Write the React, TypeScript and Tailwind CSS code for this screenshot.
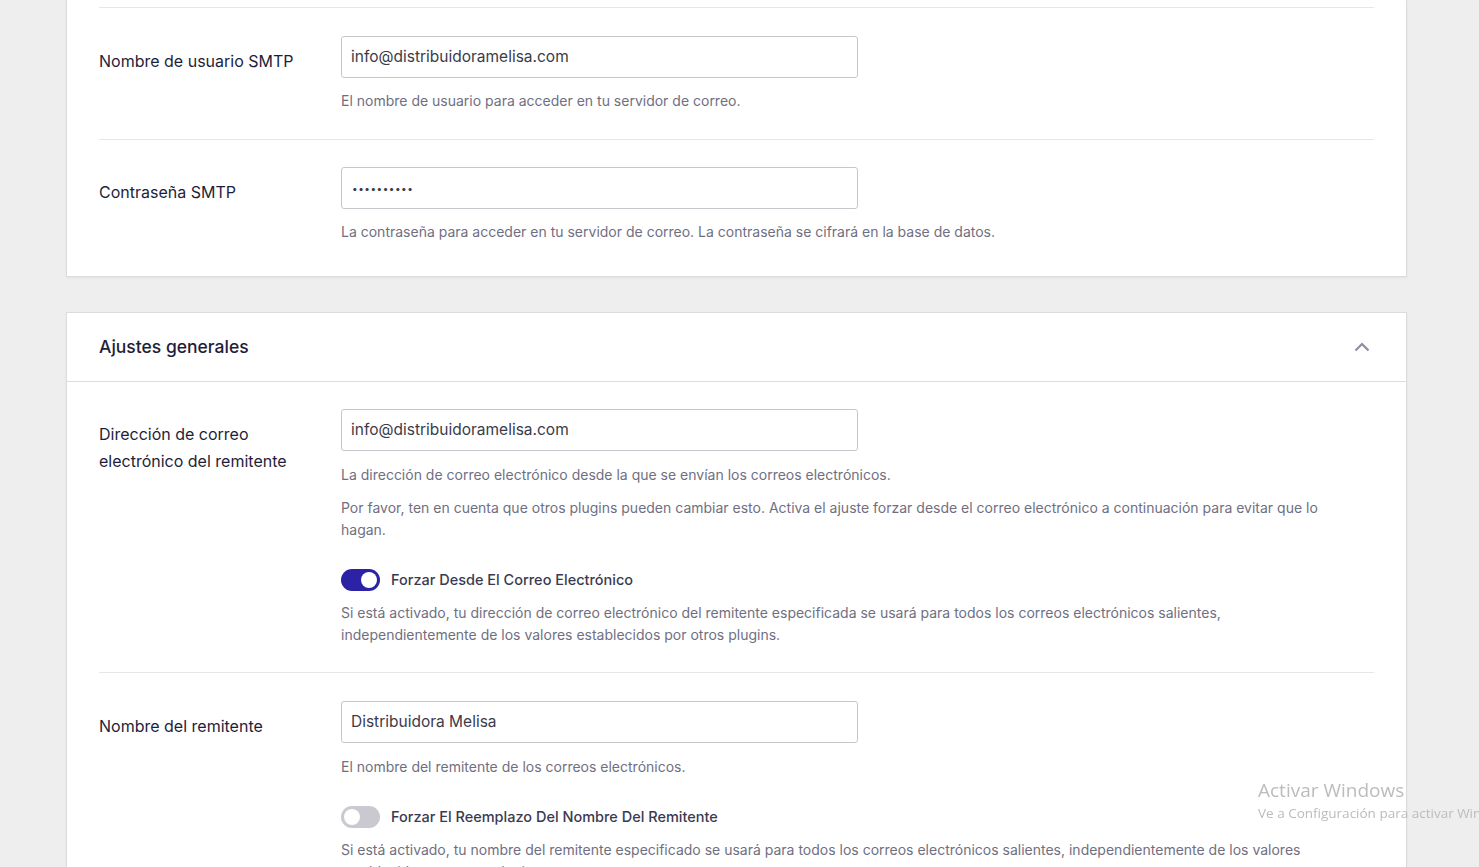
import React from "react";

const font = { fontFamily: "Inter, 'Noto Sans', sans-serif" };

function Toggle({ on }: { on: boolean }) {
  return (
    <div
      className={
        "relative h-[22px] w-[39px] shrink-0 rounded-full " +
        (on ? "bg-[#2b22a6]" : "bg-[#c9c9cf]")
      }
    >
      <div
        className={
          "absolute top-[3px] h-[16px] w-[16px] rounded-full bg-white " +
          (on ? "left-[20px]" : "left-[3px]")
        }
      />
    </div>
  );
}

function Help({ children, className = "" }: { children: React.ReactNode; className?: string }) {
  return (
    <p className={"text-[14px] leading-[22px] text-[#6f6f82] " + className}>{children}</p>
  );
}

function Input({ value }: { value: string }) {
  return (
    <div className="flex h-[42px] w-[517px] items-center rounded-[3px] border border-[#c6c6cc] bg-white pl-[9px] text-[15.5px] text-[#3b3b4a]">
      {value}
    </div>
  );
}

function Label({ children }: { children: React.ReactNode }) {
  return (
    <div className="w-[242px] shrink-0 pt-[12px] pr-[20px] text-[16px] leading-[27px] text-[#1e1e3a]">
      {children}
    </div>
  );
}

function ToggleRow({ on, text }: { on: boolean; text: string }) {
  return (
    <div className="mt-[28px] flex items-center gap-[11px]">
      <Toggle on={on} />
      <span className="text-[14.5px] font-medium text-[#3a3a50]">{text}</span>
    </div>
  );
}

export default function App() {
  return (
    <div
      className="h-[867px] w-full overflow-hidden bg-[#eeeeee] pl-[66px]"
      style={font}
    >
      {/* Top card (continued from above) */}
      <div className="w-[1341px] border-x border-b border-[#dcdcde] bg-white px-[32px] pb-[33px] shadow-[0_1px_2px_rgba(0,0,0,0.06)]">
        <div className="h-[8px] border-b border-[#e6e6e8]" />
        <div className="flex border-b border-[#e6e6e8] pt-[28px] pb-[27px]">
          <Label>Nombre de usuario SMTP</Label>
          <div>
            <Input value="info@distribuidoramelisa.com" />
            <Help className="mt-[12px]">
              El nombre de usuario para acceder en tu servidor de correo.
            </Help>
          </div>
        </div>
        <div className="flex pt-[27px]">
          <Label>Contraseña SMTP</Label>
          <div>
            <div className="flex h-[42px] w-[517px] items-center rounded-[3px] border border-[#c6c6cc] bg-white pl-[10px] text-[10px] tracking-[0.5px] text-[#3b3b4a]">
              ••••••••••
            </div>
            <Help className="mt-[12px]">
              La contraseña para acceder en tu servidor de correo. La contraseña se cifrará en la base de datos.
            </Help>
          </div>
        </div>
      </div>

      {/* Ajustes generales */}
      <div className="mt-[35px] w-[1341px] border border-[#dcdcde] bg-white shadow-[0_1px_2px_rgba(0,0,0,0.06)]">
        <div className="flex h-[69px] items-center justify-between border-b border-[#dcdcde] px-[32px]">
          <h2 className="text-[17.5px] font-medium text-[#1e1e3a]">Ajustes generales</h2>
          <svg width="16" height="10" viewBox="0 0 16 10" className="mr-[4px]">
            <path d="M1.5 8.5 L8 2 L14.5 8.5" fill="none" stroke="#8e8ea3" strokeWidth="2.2" />
          </svg>
        </div>
        <div className="px-[32px]">
          <div className="flex border-b border-[#e6e6e8] pt-[27px] pb-[26px]">
            <Label>Dirección de correo electrónico del remitente</Label>
            <div className="flex-1">
              <Input value="info@distribuidoramelisa.com" />
              <Help className="mt-[13px]">
                La dirección de correo electrónico desde la que se envían los correos electrónicos.
              </Help>
              <Help className="mt-[11px] max-w-[1010px]">
                Por favor, ten en cuenta que otros plugins pueden cambiar esto. Activa el ajuste forzar desde el correo electrónico a continuación para evitar que lo hagan.
              </Help>
              <ToggleRow on={true} text="Forzar Desde El Correo Electrónico" />
              <Help className="mt-[11px] max-w-[900px]">
                Si está activado, tu dirección de correo electrónico del remitente especificada se usará para todos los correos electrónicos salientes, independientemente de los valores establecidos por otros plugins.
              </Help>
            </div>
          </div>
          <div className="flex pt-[28px] pb-[40px]">
            <Label>Nombre del remitente</Label>
            <div className="flex-1">
              <Input value="Distribuidora Melisa" />
              <Help className="mt-[13px]">
                El nombre del remitente de los correos electrónicos.
              </Help>
              <ToggleRow on={false} text="Forzar El Reemplazo Del Nombre Del Remitente" />
              <Help className="mt-[11px] max-w-[990px]">
                Si está activado, tu nombre del remitente especificado se usará para todos los correos electrónicos salientes, independientemente de los valores establecidos por otros plugins.
              </Help>
            </div>
          </div>
        </div>
      </div>

      {/* Windows activation watermark */}
      <div className="pointer-events-none fixed left-[1258px] top-[777px] whitespace-nowrap text-[#bcbcbc]" style={{ fontFamily: "'Open Sans', sans-serif" }}>
        <div className="text-[19px] leading-[26px]">Activar Windows</div>
        <div className="text-[13.5px] leading-[20px]">Ve a Configuración para activar Windows.</div>
      </div>
    </div>
  );
}
